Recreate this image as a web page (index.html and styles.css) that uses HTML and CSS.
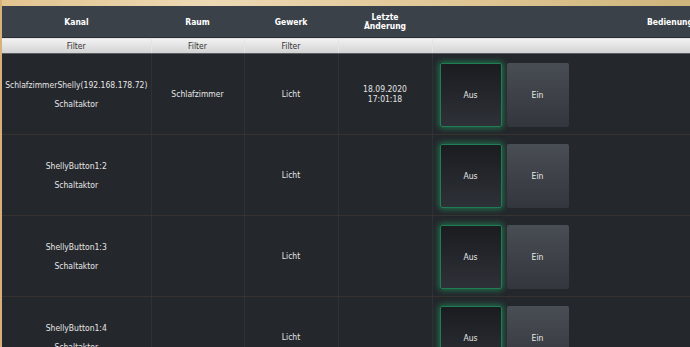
FILE: index.html
```html
<!DOCTYPE html>
<html lang="de">
<head>
    <meta charset="UTF-8">
    <meta name="viewport" content="width=device-width, initial-scale=1.0">
    <title>Kanäle</title>
    <link rel="stylesheet" href="styles.css">
</head>
<body>
    <div class="top-strip"></div>
    <table class="grid">
        <colgroup>
            <col class="col-kanal">
            <col class="col-raum">
            <col class="col-gewerk">
            <col class="col-datum">
            <col class="col-bedienung">
        </colgroup>
        <thead>
            <tr class="head-row">
                <th>Kanal</th>
                <th>Raum</th>
                <th>Gewerk</th>
                <th>Letzte<br>Änderung</th>
                <th>Bedienung</th>
            </tr>
            <tr class="filter-row">
                <td>Filter</td>
                <td>Filter</td>
                <td>Filter</td>
                <td></td>
                <td></td>
            </tr>
        </thead>
        <tbody>
            <tr>
                <td>
                    <div class="channel-name">SchlafzimmerShelly(192.168.178.72)</div>
                    <div class="channel-type">Schaltaktor</div>
                </td>
                <td>Schlafzimmer</td>
                <td>Licht</td>
                <td>18.09.2020<br>17:01:18</td>
                <td class="controls">
                    <div class="switch">
                        <button class="btn btn-off active">Aus</button>
                        <button class="btn btn-on">Ein</button>
                    </div>
                </td>
            </tr>
            <tr>
                <td>
                    <div class="channel-name">ShellyButton1:2</div>
                    <div class="channel-type">Schaltaktor</div>
                </td>
                <td></td>
                <td>Licht</td>
                <td></td>
                <td class="controls">
                    <div class="switch">
                        <button class="btn btn-off active">Aus</button>
                        <button class="btn btn-on">Ein</button>
                    </div>
                </td>
            </tr>
            <tr>
                <td>
                    <div class="channel-name">ShellyButton1:3</div>
                    <div class="channel-type">Schaltaktor</div>
                </td>
                <td></td>
                <td>Licht</td>
                <td></td>
                <td class="controls">
                    <div class="switch">
                        <button class="btn btn-off active">Aus</button>
                        <button class="btn btn-on">Ein</button>
                    </div>
                </td>
            </tr>
            <tr>
                <td>
                    <div class="channel-name">ShellyButton1:4</div>
                    <div class="channel-type">Schaltaktor</div>
                </td>
                <td></td>
                <td>Licht</td>
                <td></td>
                <td class="controls">
                    <div class="switch">
                        <button class="btn btn-off active">Aus</button>
                        <button class="btn btn-on">Ein</button>
                    </div>
                </td>
            </tr>
        </tbody>
    </table>
</body>
</html>
```

FILE: styles.css
```css
html, body {
    margin: 0;
    padding: 0;
    height: 100%;
}
body {
    font-family: "DejaVu Sans Condensed", "DejaVu Sans", sans-serif;
    font-size: 8.5px;
    background-color: #24272c;
    border-left: 2px solid #d6b27a;
    overflow: hidden;
    color: #e6e6e6;
}
.top-strip {
    height: 6px;
    background: linear-gradient(90deg, #e2c48f 0%, #ecd9b4 30%, #e4cb9d 55%, #d9c08a 80%, #cdb57c 100%);
}
.grid {
    border-collapse: collapse;
    table-layout: fixed;
    width: 906px;
}
.col-kanal { width: 149px; }
.col-raum { width: 93px; }
.col-gewerk { width: 94px; }
.col-datum { width: 94px; }
.col-bedienung { width: 476px; }

.head-row th {
    background-color: #3b4149;
    color: #ffffff;
    font-weight: bold;
    height: 30px;
    padding: 1px 0 0;
    line-height: 9px;
    text-align: center;
    vertical-align: middle;
    border-bottom: 1px solid #2a2d33;
}
.filter-row td {
    background: linear-gradient(#f2f2f2, #d2d2d2);
    color: #333;
    height: 15px;
    padding: 0;
    text-align: center;
    border-left: 1px solid #e4e4e4;
    border-bottom: 1px solid #5a5d62;
}
.filter-row td:first-child {
    border-left: none;
}

tbody td {
    height: 80px;
    padding: 0;
    text-align: center;
    vertical-align: middle;
    line-height: 10px;
    border-left: 1px solid #2e3136;
    border-bottom: 1px solid #36332e;
}
tbody td:first-child {
    border-left: none;
}
.channel-name {
    margin-bottom: 9px;
}
.controls {
    text-align: left;
}
.switch {
    display: flex;
    gap: 5px;
    padding-left: 7px;
    padding-top: 2px;
}
.btn {
    width: 62px;
    height: 64px;
    font-family: inherit;
    font-size: 8.5px;
    color: #e8e8e8;
    border-radius: 2px;
    padding: 0;
    cursor: pointer;
}
.btn-off {
    background: linear-gradient(#1a1c20, #2e3137);
    border: 1px solid #1e7d55;
}
.btn-off.active {
    box-shadow: 0 0 6px 1px rgba(30, 190, 110, 0.55);
}
.btn-on {
    background: linear-gradient(#494d54, #33363c);
    border: none;
}
```
